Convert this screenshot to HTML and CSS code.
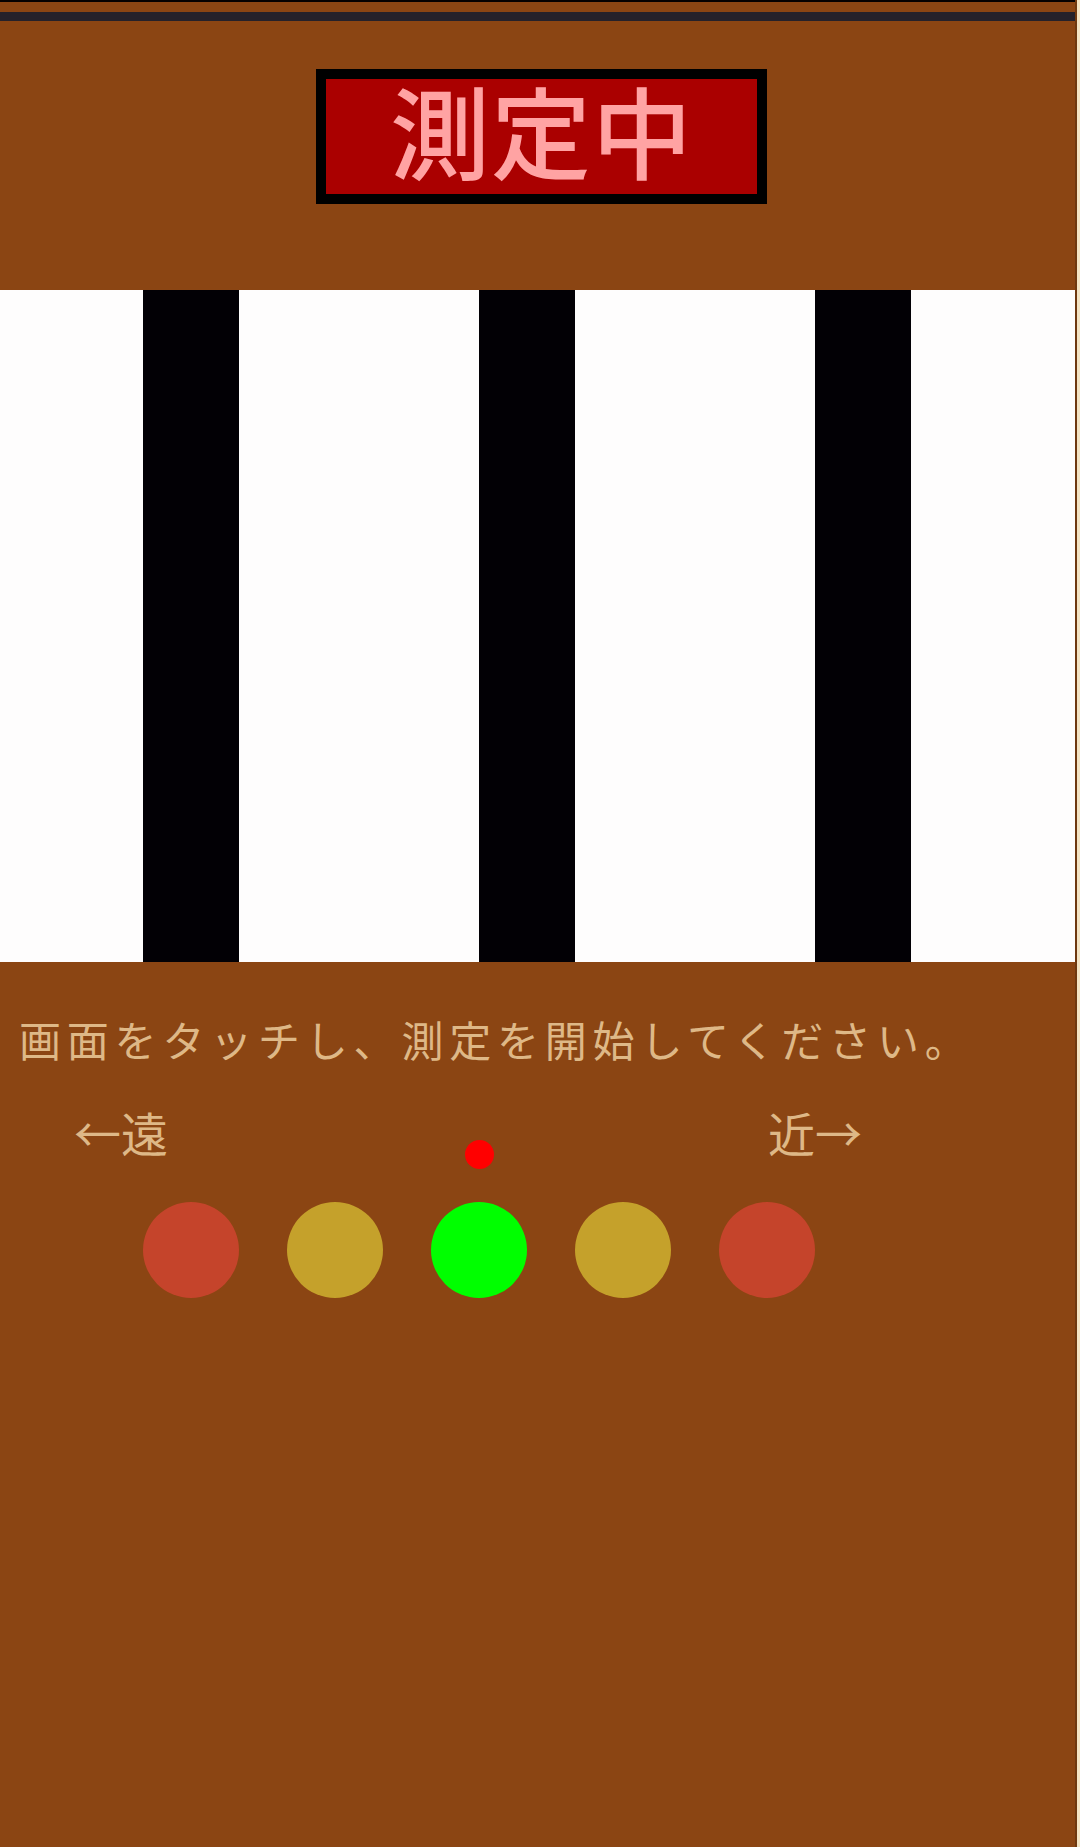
FILE: index.html
```html
<!DOCTYPE html>
<html lang="ja">
<head>
<meta charset="utf-8">
<title>測定中</title>
<link rel="stylesheet" href="styles.css">
</head>
<body>
<div class="app">
  <div class="status-line"></div>
  <div class="status-gap"></div>
  <div class="status-bar"></div>
  <header class="header">
    <div class="badge">測定中</div>
  </header>
  <section class="stripes">
    <div class="stripe"></div>
    <div class="stripe"></div>
    <div class="stripe"></div>
  </section>
  <section class="panel">
    <p class="instruction">画面をタッチし、測定を開始してください。</p>
    <div class="scale-labels">
      <span class="label label-far">←遠</span>
      <span class="marker"></span>
      <span class="label label-near">近→</span>
    </div>
    <div class="lights">
      <span class="light light-red"></span>
      <span class="light light-gold"></span>
      <span class="light light-green"></span>
      <span class="light light-gold"></span>
      <span class="light light-red"></span>
    </div>
  </section>
</div>
</body>
</html>
```
FILE: styles.css
```css
html, body {
  margin: 0;
  padding: 0;
}
body {
  background: #f4e4c4;
  font-family: "Noto Sans CJK JP", "Noto Sans", sans-serif;
}
.app {
  width: 1075px;
  height: 1847px;
  background: #8b4513;
  border-right: 2px solid #6e3810;
  display: flex;
  flex-direction: column;
}
.status-line {
  height: 2px;
  background: #050000;
}
.status-gap {
  height: 10px;
}
.status-bar {
  height: 9px;
  background: #25212a;
}
.header {
  height: 269px;
  box-sizing: border-box;
  padding-top: 48px;
  padding-left: 316px;
}
.badge {
  width: 431px;
  height: 100px;
  padding-bottom: 15px;
  border: 10px solid #000;
  background: #aa0000;
  color: #ffa3a3;
  font-size: 100px;
  font-weight: 500;
  line-height: 100px;
  text-align: center;
  letter-spacing: 1px;
  box-sizing: content-box;
}
.stripes {
  height: 672px;
  background: #fefdfd;
  display: flex;
  gap: 240px;
  padding-left: 143px;
}
.stripe {
  width: 96px;
  height: 100%;
  background: #020005;
}
.panel {
  flex: 1;
  display: flex;
  flex-direction: column;
}
.instruction {
  margin: 0;
  padding: 49px 0 0 19px;
  font-size: 42px;
  font-weight: 400;
  line-height: 56px;
  letter-spacing: 5.8px;
  color: #deb887;
  white-space: nowrap;
}
.scale-labels {
  display: flex;
  align-items: flex-start;
  padding: 37px 0 0 74px;
  height: 64px;
}
.label {
  font-size: 47px;
  line-height: 56px;
  color: #deb887;
}
.marker {
  width: 29px;
  height: 29px;
  border-radius: 50%;
  background: #ff0000;
  margin-left: 297px;
  margin-top: 36px;
}
.label-near {
  margin-left: 274px;
}
.lights {
  display: flex;
  gap: 48px;
  padding-left: 143px;
  margin-top: 34px;
}
.light {
  width: 96px;
  height: 96px;
  border-radius: 50%;
}
.light-red {
  background: #c5442b;
}
.light-gold {
  background: #c5a12b;
}
.light-green {
  background: #00ff00;
}
```
